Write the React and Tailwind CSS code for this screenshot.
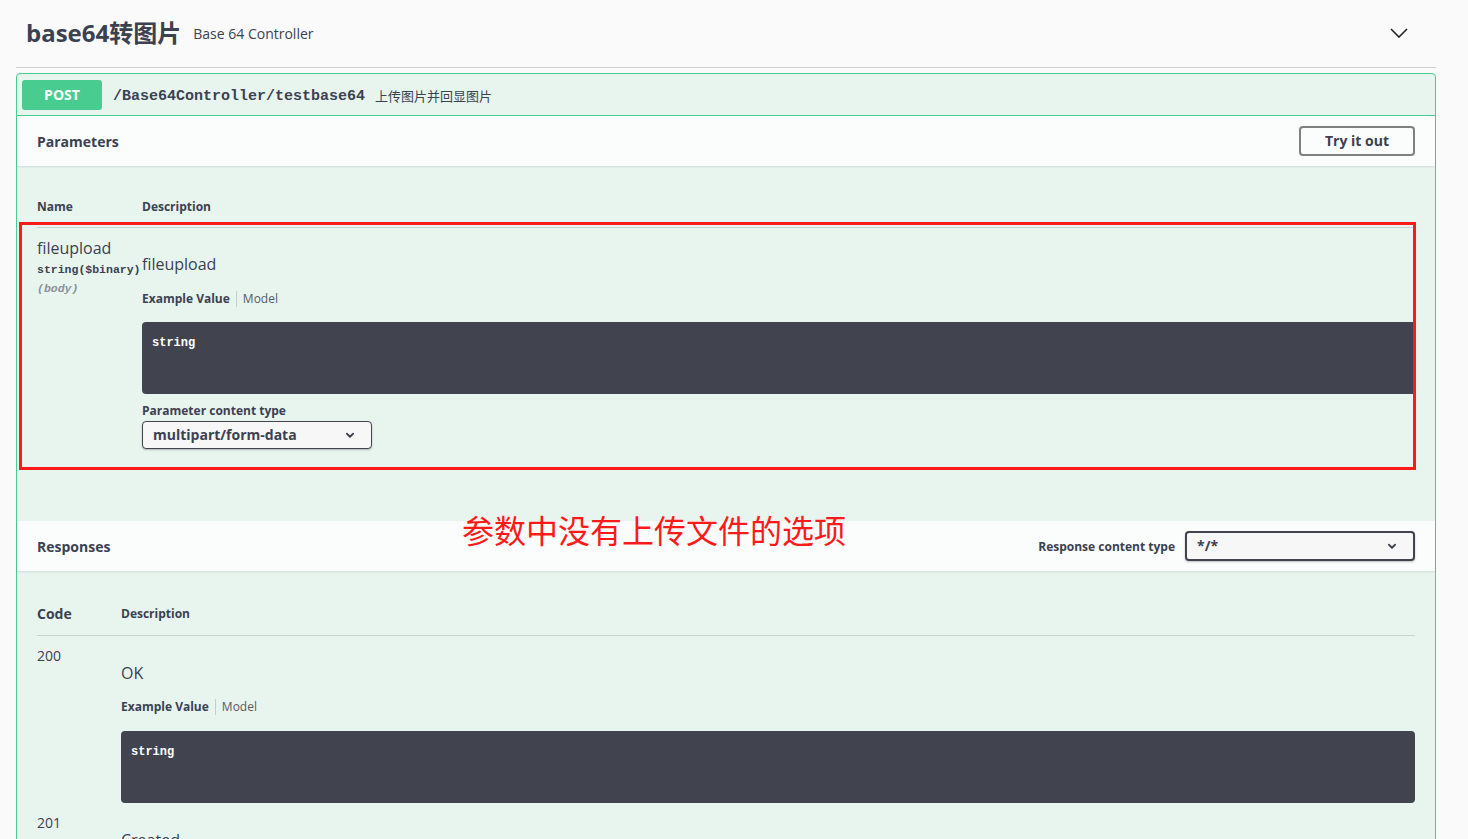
import React from "react";

const Chevron = ({ className }) => (
    <svg viewBox="0 0 20 20" className={className} fill="none" stroke="currentColor" strokeWidth="2.6" strokeLinecap="round" strokeLinejoin="round">
        <path d="M5.5 8l4.5 4.5L14.5 8" />
    </svg>
);

const ExampleTabs = () => (
    <div className="flex items-center text-[12px] leading-4">
        <span className="font-bold">Example Value</span>
        <span className="mx-[6px] h-4 w-px bg-[#c8ccd0]" />
        <span className="text-[#555a66]">Model</span>
    </div>
);

const CodeBlock = ({ className }) => (
    <div className={"h-[72px] bg-[#41444e] px-[10px] pt-[10px] leading-4 text-white " + className}>
        <span className="font-['Liberation_Mono',monospace] text-[12px] font-bold leading-4">string</span>
    </div>
);

export default function App() {
    return (
        <div className="h-[839px] overflow-hidden bg-[#fafafa] pl-4 pr-8 font-['Open_Sans','Noto_Sans_CJK_SC',sans-serif] text-[#3b4151]">
            <div className="flex h-[68px] items-center border-b border-[#cfcfcf] pl-[10px] pr-[28px] pb-[2px]">
                <h3 className="text-[24px] font-bold">base64转图片</h3>
                <span className="ml-[12px] mt-[2px] text-sm">Base 64 Controller</span>
                <svg viewBox="0 0 18 10" className="ml-auto h-[10px] w-[18px] text-[#222]" fill="none" stroke="currentColor" strokeWidth="1.6">
                    <path d="M1 1l8 8 8-8" />
                </svg>
            </div>

            <div className="relative mt-[5px] rounded-[4px] border border-[#49cc90] bg-[#e8f5ef]">
                <div className="flex h-[42px] items-center border-b border-[#49cc90] px-[5px]">
                    <span className="flex h-[30px] w-[80px] items-center justify-center rounded-[3px] bg-[#49cc90] text-sm font-bold text-white">
                        POST
                    </span>
                    <span className="ml-[11px] mt-[4px] font-['Liberation_Mono',monospace] text-[15px] font-bold leading-5">
                        /Base64Controller/testbase64
                    </span>
                    <span className="ml-[10px] mt-[2px] text-[13px] leading-5">上传图片并回显图片</span>
                </div>

                <div className="flex h-[50px] items-center justify-between bg-white/80 px-5 shadow-[0_1px_2px_rgba(0,0,0,0.1)]">
                    <h4 className="mt-[1px] text-sm font-bold">Parameters</h4>
                    <button className="h-[30px] w-[116px] rounded-[4px] border-2 border-[#808080] text-sm font-bold">
                        Try it out
                    </button>
                </div>

                <div className="px-5 pt-[33px] pb-[72px]">
                    <div className="flex border-b border-[#c9d3cf] pb-[12px] text-[12px] font-bold leading-4">
                        <div className="w-[105px]">Name</div>
                        <div>Description</div>
                    </div>
                    <div className="flex pt-[10px]">
                        <div className="w-[105px] shrink-0">
                            <div className="text-base leading-5">fileupload</div>
                            <div className="mt-[5px] whitespace-nowrap font-['Liberation_Mono',monospace] text-[11.5px] font-bold leading-[14px]">
                                string($binary)
                            </div>
                            <div className="mt-[5px] font-['Liberation_Mono',monospace] text-[11.5px] italic font-bold leading-[14px] text-[#8a8f99]">
                                (body)
                            </div>
                        </div>
                        <div className="flex-1">
                            <div className="mt-[14px] text-base leading-6">fileupload</div>
                            <div className="mt-[15px]">
                                <ExampleTabs />
                            </div>
                            <CodeBlock className="mt-[15px] rounded-l-[4px]" />
                            <div className="mt-[9px] text-[12px] font-bold leading-4">Parameter content type</div>
                            <div className="mt-[2px] flex h-[28px] w-[230px] items-center justify-between rounded-[4px] border border-[#41444e] bg-[#f7f7f7] pl-[10px] pr-[14px] shadow-[0_1px_2px_rgba(0,0,0,0.25)]">
                                <span className="text-sm font-bold">multipart/form-data</span>
                                <Chevron className="h-[14px] w-[14px]" />
                            </div>
                        </div>
                    </div>
                </div>

                <div className="flex h-[50px] items-center bg-white/80 px-5 shadow-[0_1px_2px_rgba(0,0,0,0.1)]">
                    <h4 className="mt-[2px] text-sm font-bold">Responses</h4>
                    <span className="ml-auto mr-[10px] mt-[2px] text-[12px] font-bold">Response content type</span>
                    <div className="flex h-[30px] w-[230px] items-center justify-between rounded-[4px] border-2 border-[#41444e] bg-[#f7f7f7] pl-[10px] pr-[14px] shadow-[0_1px_2px_rgba(0,0,0,0.25)]">
                        <span className="text-sm font-bold">*/*</span>
                        <Chevron className="h-[14px] w-[14px]" />
                    </div>
                </div>

                <div className="px-5 pt-[35px]">
                    <div className="flex items-center border-b border-[#c9d3cf] pb-[13px] font-bold">
                        <div className="w-[84px] text-sm leading-4">Code</div>
                        <div className="text-[12px] leading-4">Description</div>
                    </div>
                    <div className="flex">
                        <div className="w-[84px] pt-[10px] text-sm leading-5">200</div>
                        <div className="flex-1 pt-[26px]">
                            <div className="text-base leading-[22px]">OK</div>
                            <div className="mt-[15px]">
                                <ExampleTabs />
                            </div>
                            <CodeBlock className="mt-4 rounded-[4px]" />
                        </div>
                    </div>
                    <div className="flex">
                        <div className="w-[84px] pt-[10px] text-sm leading-5">201</div>
                        <div className="flex-1 pt-[26px]">
                            <div className="text-base leading-[22px]">Created</div>
                        </div>
                    </div>
                </div>

                <div className="pointer-events-none absolute left-[2px] top-[148px] h-[248px] w-[1397px] border-[3px] border-[#ff1a1a]" />
                <div className="pointer-events-none absolute left-[445px] top-[437px] whitespace-nowrap font-['Noto_Sans_CJK_SC',sans-serif] text-[32px] leading-[36px] text-[#ff1a1a]">
                    参数中没有上传文件的选项
                </div>
            </div>
        </div>
    );
}
